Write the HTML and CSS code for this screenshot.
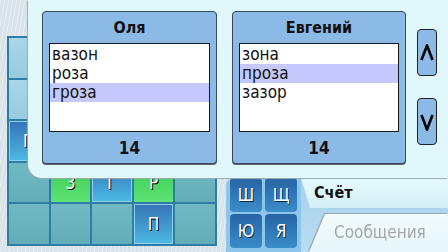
FILE: index.html
```html
<!DOCTYPE html>
<html lang="ru">
<head>
    <meta charset="UTF-8">
    <title>Слова</title>
    <link rel="stylesheet" href="styles.css">
</head>
<body>
    <div class="screen">
        <!-- Game board -->
        <div class="board">
            <div class="cell light"></div><div class="cell"></div><div class="cell"></div><div class="cell"></div><div class="cell"></div>
            <div class="cell light"></div><div class="cell"></div><div class="cell"></div><div class="cell"></div><div class="cell"></div>
            <div class="cell tile">П</div><div class="cell"></div><div class="cell"></div><div class="cell"></div><div class="cell"></div>
            <div class="cell"></div><div class="cell green">З</div><div class="cell tile">Г</div><div class="cell green">Р</div><div class="cell"></div>
            <div class="cell"></div><div class="cell"></div><div class="cell"></div><div class="cell tile">П</div><div class="cell"></div>
        </div>

        <!-- Side: letters and tabs -->
        <div class="side">
            <div class="tabs">
                <div class="keypad">
                    <div class="key">Ш</div>
                    <div class="key">Щ</div>
                    <div class="key">Ю</div>
                    <div class="key">Я</div>
                </div>
                <div class="tab-col">
                    <div class="tab tab-score">Счёт</div>
                    <div class="tab-wrap">
                        <div class="tab tab-messages">Сообщения</div>
                    </div>
                </div>
            </div>
        </div>
    </div>

    <!-- Score popup -->
    <div class="popup">
        <div class="card">
            <h2>Оля</h2>
            <ul class="words">
                <li>вазон</li>
                <li>роза</li>
                <li class="selected">гроза</li>
            </ul>
            <p class="score">14</p>
        </div>

        <div class="card">
            <h2>Евгений</h2>
            <ul class="words">
                <li>зона</li>
                <li class="selected">проза</li>
                <li>зазор</li>
            </ul>
            <p class="score">14</p>
        </div>

        <div class="scroll">
            <button class="arrow">
                <svg width="14" height="18" viewBox="0 0 14 18"><path d="M1.5 16 L7 1.5 L12.5 16" fill="none" stroke="#000" stroke-width="2.6"/></svg>
            </button>
            <button class="arrow">
                <svg width="14" height="18" viewBox="0 0 14 18"><path d="M1.5 2 L7 16.5 L12.5 2" fill="none" stroke="#000" stroke-width="2.6"/></svg>
            </button>
        </div>
    </div>
</body>
</html>
```

FILE: styles.css
```css
body {
    margin: 0;
    width: 448px;
    height: 252px;
    overflow: hidden;
    position: relative;
    font-family: "DejaVu Sans Condensed", "DejaVu Sans", sans-serif;
    background-color: #d8e4ea;
    background-image: repeating-linear-gradient(100deg, rgba(255, 255, 255, 0.35) 0 1px, transparent 1px 4px);
}

.screen {
    display: flex;
    height: 252px;
}

/* Board */
.board {
    margin: 36px 0 0 7px;
    width: 210px;
    height: 210px;
    box-sizing: border-box;
    padding: 2px;
    background-color: #2f7ca6;
    display: grid;
    grid-template-columns: repeat(5, 1fr);
    grid-template-rows: repeat(5, 1fr);
    gap: 2px;
}

.cell {
    background: linear-gradient(#70b9c2, #62adb7);
    display: flex;
    align-items: center;
    justify-content: center;
    color: white;
    font-size: 17px;
    text-shadow: 1px 1px 0 #000;
}

.cell.light {
    background: linear-gradient(#a8d6e8, #98cce0);
}

.cell.tile {
    background: linear-gradient(#3672b4, #4cbbe3);
    box-shadow: inset 0 0 0 1px #8ccfe9;
}

.cell.green {
    background: linear-gradient(#38cc4c, #5ee276);
}

/* Side panel */
.side {
    flex: 1;
    display: flex;
    flex-direction: column;
    justify-content: flex-end;
    margin-left: 9px;
}

.tabs {
    display: flex;
    height: 74px;
    background: linear-gradient(#a6d2ec, #b8dcf0);
    border-top-left-radius: 8px;
}

.keypad {
    width: 71px;
    padding: 0 0 0 4px;
    display: grid;
    grid-template-columns: 32px 32px;
    grid-template-rows: 34px 34px;
    gap: 2px 3px;
    align-content: start;
    background-color: #8cc6ea;
    border-top-left-radius: 8px;
}

.key {
    background: linear-gradient(#2764a4, #3a8cc8);
    border-radius: 4px;
    color: white;
    font-size: 17px;
    display: flex;
    align-items: center;
    justify-content: center;
    text-shadow: 1px 1px 0 #0a2a4a;
}

.tab-col {
    flex: 1;
    display: flex;
    flex-direction: column;
}

.tab-score {
    height: 30px;
    line-height: 30px;
    padding-left: 13px;
    font-size: 16px;
    font-weight: bold;
    color: #111;
    background: linear-gradient(#e6fafd, #d4eff7);
    clip-path: polygon(0 0, 100% 0, 100% 100%, 9px 100%);
}

.tab-wrap {
    flex: 1;
    margin-top: 6px;
    filter: drop-shadow(-1px -1px 0 #9aa8b0);
}

.tab-messages {
    height: 100%;
    box-sizing: border-box;
    padding: 8px 0 0 33px;
    color: #a6a6a6;
    font-size: 17px;
    background: linear-gradient(#f2fbfd, #e6f6fa);
    clip-path: polygon(24px 0, 100% 0, 100% 100%, 8px 100%);
}

/* Popup with the players' words */
.popup {
    position: absolute;
    left: 28px;
    top: 0;
    width: 420px;
    height: 178px;
    box-sizing: border-box;
    padding: 11px 0 0 14px;
    display: flex;
    align-items: flex-start;
    gap: 15px;
    background-color: #e0f8fc;
    border-bottom-left-radius: 14px;
    box-shadow: -1px 1px 1px #9aaab0;
}

.card {
    width: 175px;
    height: 153px;
    box-sizing: border-box;
    background-color: #8bbae6;
    border: 1px solid #3c4a58;
    border-radius: 4px;
    box-shadow: 0 1px 0 #56606a;
    display: flex;
    flex-direction: column;
}

.card:nth-child(2) {
    width: 174px;
}

.card h2 {
    margin: 0;
    height: 31px;
    line-height: 31px;
    text-align: center;
    font-size: 16px;
    color: #111;
}

.words {
    list-style: none;
    margin: 0 6px;
    padding: 1px 0 0 0;
    height: 89px;
    box-sizing: border-box;
    background-color: white;
    border: 1px solid #1a1a1a;
}

.words li {
    height: 19px;
    line-height: 19px;
    padding-left: 2px;
    font-size: 17px;
    color: #111;
}

.words li.selected {
    background-color: #c4c8fc;
}

.score {
    margin: 0;
    flex: 1;
    display: flex;
    align-items: center;
    justify-content: center;
    font-size: 17px;
    font-weight: bold;
    color: #111;
}

/* Scroll arrows */
.scroll {
    margin: 18px 0 0 -4px;
    display: flex;
    flex-direction: column;
    gap: 22px;
}

.arrow {
    width: 20px;
    height: 47px;
    padding: 0;
    background-color: #8bbae6;
    border: 1px solid #222;
    border-radius: 4px;
    display: flex;
    align-items: center;
    justify-content: center;
}
```
